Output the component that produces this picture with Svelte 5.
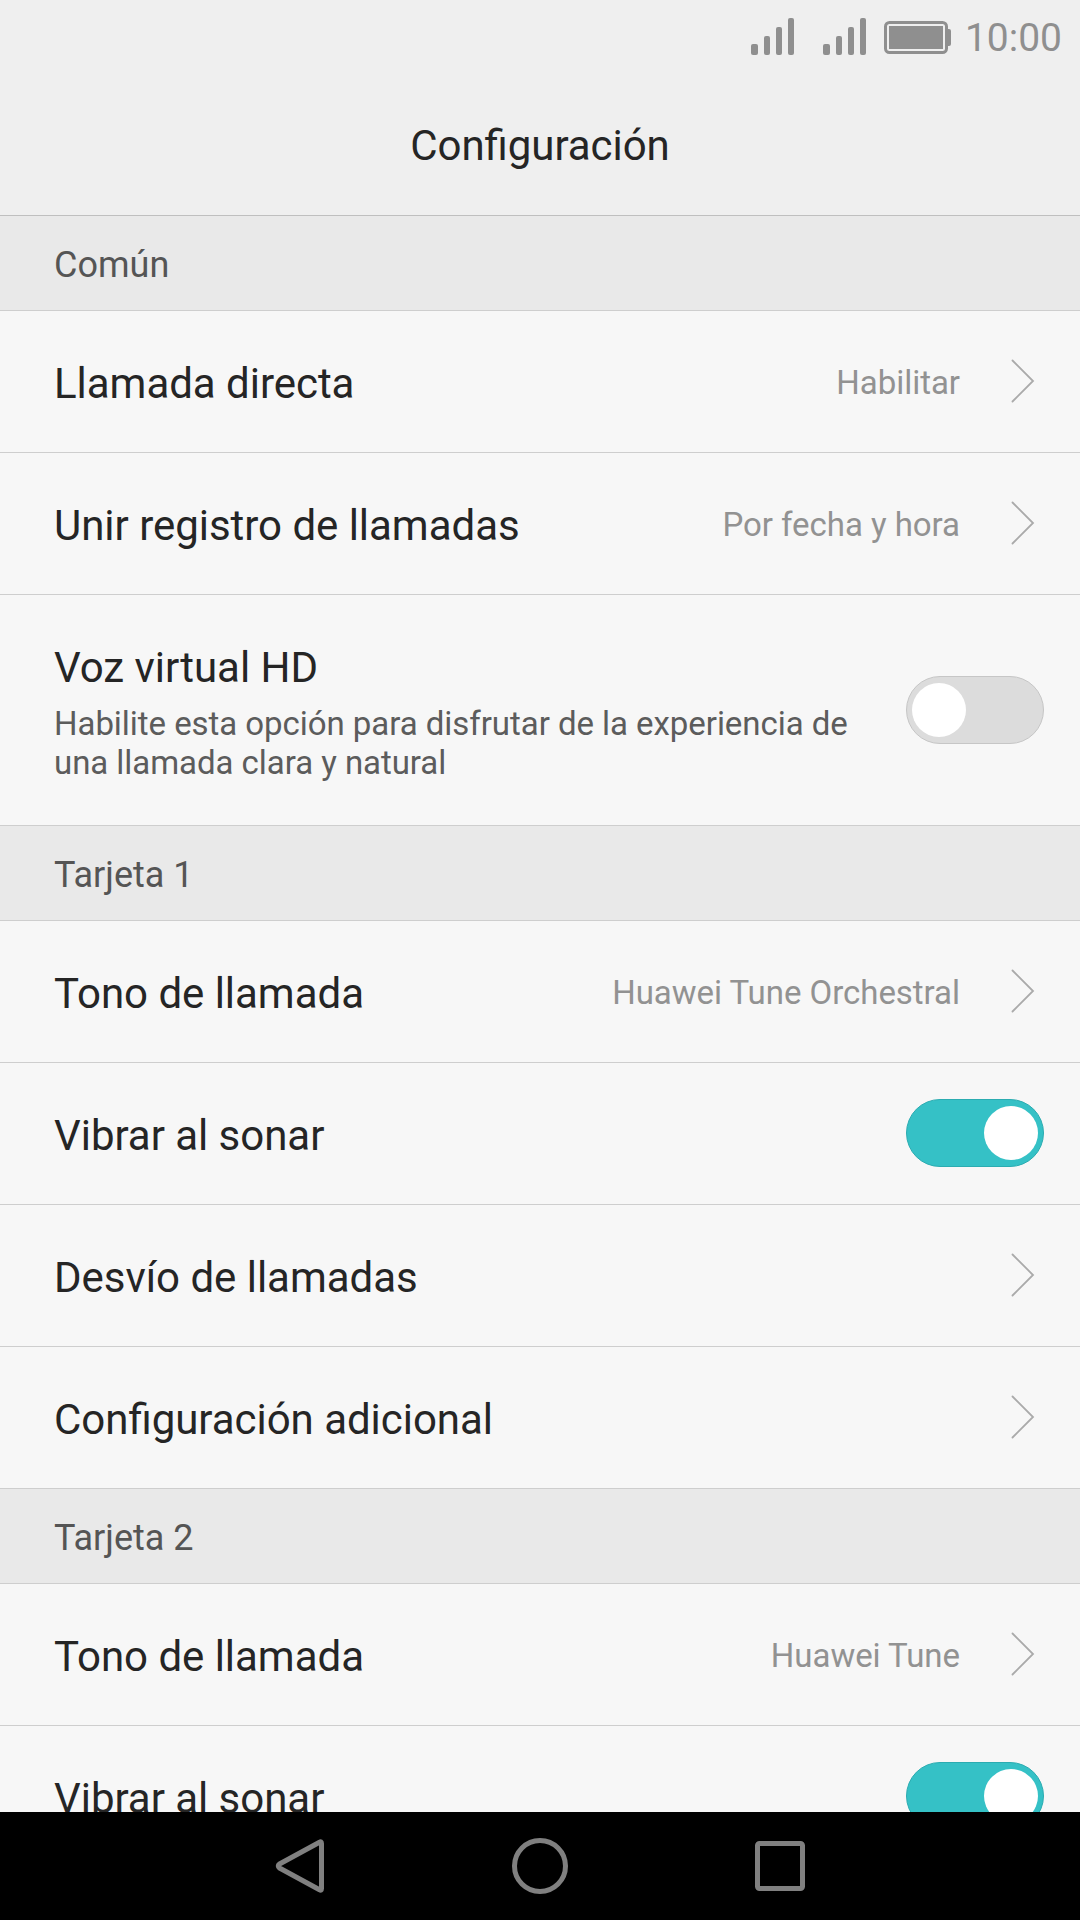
<script>
  const sections = [
    {
      title: 'Común',
      rows: [
        { label: 'Llamada directa', value: 'Habilitar', kind: 'link' },
        { label: 'Unir registro de llamadas', value: 'Por fecha y hora', kind: 'link' },
        {
          label: 'Voz virtual HD',
          note: 'Habilite esta opción para disfrutar de la experiencia de una llamada clara y natural',
          kind: 'switch',
          on: false
        }
      ]
    },
    {
      title: 'Tarjeta 1',
      rows: [
        { label: 'Tono de llamada', value: 'Huawei Tune Orchestral', kind: 'link' },
        { label: 'Vibrar al sonar', kind: 'switch', on: true },
        { label: 'Desvío de llamadas', kind: 'link' },
        { label: 'Configuración adicional', kind: 'link' }
      ]
    },
    {
      title: 'Tarjeta 2',
      rows: [
        { label: 'Tono de llamada', value: 'Huawei Tune', kind: 'link' },
        { label: 'Vibrar al sonar', kind: 'switch', on: true }
      ]
    }
  ];
</script>

{#snippet signal()}
  <svg class="signal" width="43" height="37" viewBox="0 0 43 37">
    <rect x="0" y="26" width="7" height="11" rx="2" />
    <rect x="13" y="18" width="6" height="19" rx="2" />
    <rect x="25" y="9" width="6" height="28" rx="2" />
    <rect x="37" y="0" width="6" height="37" rx="2" />
  </svg>
{/snippet}

<div class="screen">
  <header>
    <div class="status">
      {@render signal()}
      {@render signal()}
      <svg class="battery" width="67" height="33" viewBox="0 0 67 33">
        <rect x="1.5" y="1.5" width="61" height="30" rx="4" fill="none" stroke="#8f8f8f" stroke-width="3" />
        <rect x="5" y="5" width="54" height="23" />
        <path d="M64 8h1q2 0 2 2v13q0 2-2 2h-1z" />
      </svg>
      <span class="clock">10:00</span>
    </div>
    <h1>Configuración</h1>
  </header>

  <main>
    {#each sections as section}
      <h2>{section.title}</h2>
      {#each section.rows as row}
        <div class="row" class:tall={row.note}>
          <div class="text">
            <div class="label">{row.label}</div>
            {#if row.note}<div class="note">{row.note}</div>{/if}
          </div>
          {#if row.value}<div class="value">{row.value}</div>{/if}
          {#if row.kind === 'link'}
            <svg class="chevron" width="24" height="44" viewBox="0 0 24 44">
              <path d="M1.5 1.5L22 22L1.5 42.5" />
            </svg>
          {:else}
            <div class="switch" class:on={row.on}><div class="knob"></div></div>
          {/if}
        </div>
      {/each}
    {/each}
  </main>

  <nav>
    <div class="key">
      <svg width="60" height="60" viewBox="0 0 60 60">
        <path d="M51.5 7.5V52.5Q51.5 55 49.5 53.7L9.5 32Q7 30 9.5 28L49.5 6.3Q51.5 5 51.5 7.5Z" />
      </svg>
    </div>
    <div class="key">
      <svg width="60" height="60" viewBox="0 0 60 60"><circle cx="30" cy="30" r="25.5" /></svg>
    </div>
    <div class="key">
      <svg width="60" height="60" viewBox="0 0 60 60"><rect x="7.5" y="7.5" width="45" height="45" rx="2" /></svg>
    </div>
  </nav>
</div>

<style>
  :global(body) {
    margin: 0;
  }
  .screen {
    display: flex;
    flex-direction: column;
    width: 1080px;
    height: 1920px;
    overflow: hidden;
    background: #f7f7f7;
    font-family: Roboto, sans-serif;
    /* keeps the fi ligature in letter-spaced text */
    font-feature-settings: 'liga' 1;
    color: #252525;
  }
  header {
    flex: none;
    box-sizing: border-box;
    height: 216px;
    background: #efefef;
    border-bottom: 1px solid #bfbfbf;
  }
  .status {
    display: flex;
    align-items: flex-start;
    justify-content: flex-end;
    box-sizing: border-box;
    height: 72px;
    padding-right: 18px;
    fill: #8f8f8f;
    color: #8f8f8f;
  }
  .signal {
    margin: 18px 29px 0 0;
  }
  .signal + .battery {
    margin: 21px 14px 0 -11px;
  }
  .clock {
    margin-top: 15px;
    font-size: 39px;
    line-height: 46px;
  }
  h1 {
    margin: 0;
    padding-top: 49px;
    font-size: 42px;
    line-height: 50px;
    font-weight: 400;
    letter-spacing: -0.05px;
    text-align: center;
  }
  main {
    flex: 1;
    min-height: 0;
    overflow: hidden;
  }
  h2 {
    box-sizing: border-box;
    height: 95px;
    margin: 0;
    padding: 27px 54px 0;
    border-bottom: 1px solid #cecece;
    background: #e9e9e9;
    color: #555;
    font-size: 36px;
    line-height: 44px;
    font-weight: 400;
  }
  .row {
    display: flex;
    align-items: center;
    box-sizing: border-box;
    height: 142px;
    padding: 0 36px 1px 54px;
    border-bottom: 1px solid #cecece;
  }
  .tall {
    height: 231px;
    padding-bottom: 0;
  }
  .text {
    flex: 1;
    padding-top: 5px;
  }
  .label {
    font-size: 42px;
    line-height: 50px;
    letter-spacing: -0.03px;
    white-space: nowrap;
  }
  .note {
    width: 810px;
    margin-top: 11px;
    color: #5c5c5c;
    font-size: 33px;
    line-height: 39px;
    letter-spacing: -0.05px;
  }
  .tall .label {
    margin-top: -1px;
  }
  .value {
    padding-top: 3px;
    margin-right: 51px;
    color: #929292;
    font-size: 33px;
    line-height: 40px;
    letter-spacing: -0.04px;
    white-space: nowrap;
  }
  .chevron {
    margin-right: 9px;
    fill: none;
    stroke: #aaa;
    stroke-width: 1.8;
    stroke-linecap: round;
  }
  .switch {
    display: flex;
    flex: none;
    box-sizing: border-box;
    width: 138px;
    height: 68px;
    padding: 6px 5px;
    border: 1px solid #c6c6c6;
    border-radius: 34px;
    background: #dcdcdc;
  }
  .switch.on {
    justify-content: flex-end;
    border-color: #2bacb1;
    background: #35c1c6;
  }
  .knob {
    width: 54px;
    height: 54px;
    border-radius: 50%;
    background: #fff;
  }
  nav {
    display: flex;
    flex: none;
    justify-content: center;
    height: 108px;
    background: #000;
  }
  .key {
    display: flex;
    align-items: center;
    justify-content: center;
    width: 240px;
    fill: none;
    stroke: #808080;
    stroke-width: 5;
    stroke-linejoin: round;
  }
</style>
